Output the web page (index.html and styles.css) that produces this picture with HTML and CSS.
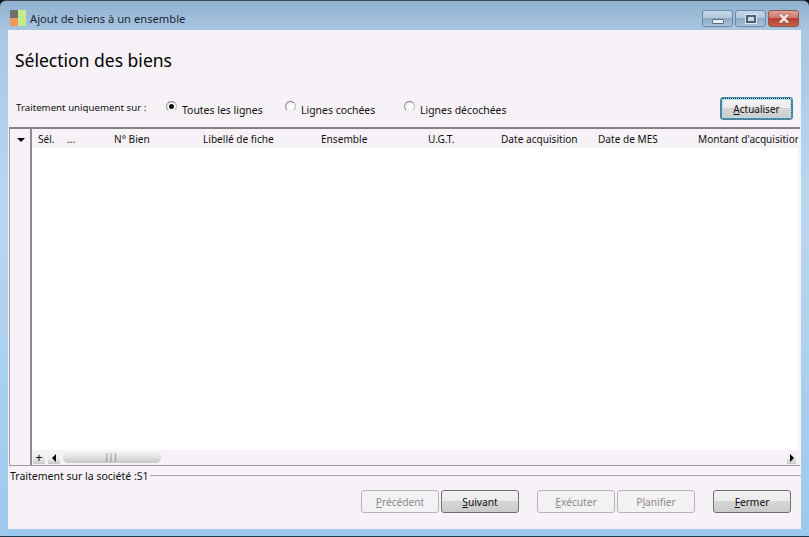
FILE: index.html
```html
<!DOCTYPE html>
<html lang="fr">
<head>
<meta charset="utf-8">
<title>Ajout de biens à un ensemble</title>
<link rel="stylesheet" href="styles.css">
</head>
<body>
<div class="window">
  <header class="titlebar">
    <svg class="app-icon" width="16" height="16" viewBox="0 0 16 16">
      <rect x="0" y="0" width="8" height="8" fill="#6f6f6b"/>
      <rect x="0" y="8" width="8" height="8" fill="#f4955a"/>
      <rect x="8" y="0" width="8" height="16" fill="#c4ec8e"/>
    </svg>
    <span class="title">Ajout de biens à un ensemble</span>
    <div class="controls">
      <div class="ctl ctl-min"><span class="glyph-min"></span></div>
      <div class="ctl ctl-max"><span class="glyph-max"></span></div>
      <div class="ctl ctl-close">
        <svg width="16" height="11" viewBox="0 0 16 11"><path d="M2 1h4l2 2.200L10 1h4L10.200 5.500 14 10h-4L8 7.800 6 10H2l3.800-4.500z" fill="#f1e6e4" stroke="#8a4236" stroke-width=".5"/></svg>
      </div>
    </div>
  </header>
  <main class="client">
    <h1 class="heading">Sélection des biens</h1>
    <div class="options">
      <span class="options-label">Traitement uniquement sur :</span>
      <label class="radio radio-a"><span class="dot on"></span><span>Toutes les lignes</span></label>
      <label class="radio radio-b"><span class="dot"></span><span>Lignes cochées</span></label>
      <label class="radio radio-c"><span class="dot"></span><span>Lignes décochées</span></label>
      <button class="btn btn-focus" type="button"><u>A</u>ctualiser</button>
    </div>
    <section class="grid">
      <div class="grid-side">
        <div class="side-head"><span class="caret"></span></div>
      </div>
      <div class="grid-main">
        <div class="cols">
          <span class="col c1">Sél.</span>
          <span class="col c2">...</span>
          <span class="col c3">N° Bien</span>
          <span class="col c4">Libellé de fiche</span>
          <span class="col c5">Ensemble</span>
          <span class="col c6">U.G.T.</span>
          <span class="col c7">Date acquisition</span>
          <span class="col c8">Date de MES</span>
          <span class="col c9">Montant d'acquisition</span>
        </div>
        <div class="rows"></div>
        <div class="hscroll">
          <span class="sbtn plus">+</span>
          <span class="sbtn sbtn-left"><span class="arrow arrow-left"></span></span>
          <span class="thumb"><span class="grip">|||</span></span>
          <span class="track"></span>
          <span class="sbtn sbtn-right"><span class="arrow arrow-right"></span></span>
        </div>
      </div>
    </section>
    <div class="legend"><span>Traitement sur la société :S1</span><span class="legend-line"></span></div>
    <footer class="actions">
      <button class="btn" type="button" disabled><u>P</u>récédent</button>
      <button class="btn gap-small" type="button"><u>S</u>uivant</button>
      <button class="btn gap-big" type="button" disabled><u>E</u>xécuter</button>
      <button class="btn gap-small" type="button" disabled>P<u>l</u>anifier</button>
      <button class="btn gap-end" type="button"><u>F</u>ermer</button>
    </footer>
  </main>
</div>
</body>
</html>
```
FILE: styles.css
```css
* { box-sizing: border-box; }
html, body { margin: 0; padding: 0; background: #111; }
body { width: 809px; height: 537px; overflow: hidden; font-family: "Noto Sans", "Open Sans", sans-serif; font-size: 11px; color: #111; }
.window {
  width: 809px; height: 537px; display: flex; flex-direction: column;
  padding: 0 8px 7px 8px; border-radius: 6px 6px 0 0;
  background: linear-gradient(180deg, #8fb0cf 0, #a9c7e2 30px, #b9d7f1 200px, #9cc9ee 100%);
  border-top: 1px solid #3a4a58; border-bottom: 1px solid #1d3a52;
}
.titlebar { height: 29px; display: flex; align-items: center; flex: none; padding: 0 0 0 2px; }
.app-icon { flex: none; margin-top: 5px; }
.title { margin-left: 4px; margin-top: 6px; font-size: 11.2px; color: #1d2630; }
.controls { margin-left: auto; display: flex; gap: 2px; align-self: flex-start; margin-top: 9px; margin-right: 2px; }
.ctl { height: 17px; border: 1px solid #6d89a3; border-radius: 3px; display: flex; align-items: center; justify-content: center; width: 31px; background: linear-gradient(180deg, #c6d8e9 0, #b2c8de 45%, #8faac6 50%, #a8c2da 100%); }
.ctl-close { border-color: #8a5a50; background: linear-gradient(180deg, #dca196 0, #cf7a69 45%, #b9402c 50%, #c8604c 100%); }
.glyph-min { width: 12px; height: 5px; margin-top: 5px; background: #eef3f8; border: 1px solid #566c84; border-radius: 1px; }
.glyph-max { width: 10px; height: 8px; border: 2px solid #4a5f76; background: #cfdbe7; box-shadow: 0 0 0 1px #dfe7ef; }
.client { flex: 1; min-height: 0; background: #f6f2f7; display: flex; flex-direction: column; }
.heading { margin: 19px 0 0 7px; height: 22px; line-height: 22px; font-size: 17.5px; font-weight: 400; color: #000; }
.options { height: 31px; margin-top: 25px; display: flex; align-items: flex-start; flex: none; font-size: 10px; }
.options-label { margin: 4px 0 0 8px; width: 150px; line-height: 15px; flex: none; font-size: 9.7px; }
.radio { display: flex; align-items: center; gap: 5px; flex: none; margin-top: 6px; height: 15px; font-size: 10.45px; }
.radio-a { width: 119px; }
.radio-b { width: 119px; }
.radio-c { width: 316px; }
.dot { width: 11px; height: 11px; border-radius: 50%; flex: none; margin-top: -7px; background: radial-gradient(circle at 60% 60%, #fff 0, #f4f4f4 55%, #d8d8d8 100%); border: 1px solid #9a9a9a; border-color: #777 #bbb #eee #999; display: flex; align-items: center; justify-content: center; }
.dot.on::after { content: ""; width: 5px; height: 5px; border-radius: 50%; background: #111; }
.btn {
  width: 78px; height: 23px; padding: 0; flex: none; font: inherit; font-size: 10.2px; color: #111; text-align: center;
  border: 1px solid #6f6f6f; border-radius: 3px;
  background: linear-gradient(180deg, #f3f3f3 0, #ececec 45%, #d6d6d6 50%, #cbcbcb 100%);
}
.btn:disabled { background: #f4f1f5; border-color: #b6b4b6; color: #8a8a8a; }
.btn-focus { width: 73px; margin-top: 1px; font-size: 10px; border: 1px solid #3d8aa8; outline: 1px dotted #222; outline-offset: -2px; box-shadow: inset 0 0 0 2px #a7e0f2; }
.grid { flex: none; margin: 0 1px; height: 339px; display: flex; border-top: 2px solid #828282; border-bottom: 1px solid #9a9a9a; background: #f6f2f7; border-left: 1px solid #a0a0a0; }
.grid-side { width: 22px; flex: none; background: #f6f2f7; border-right: 2px solid #8c8c8c; }
.side-head { height: 21px; display: flex; align-items: center; justify-content: center; }
.caret { width: 0; height: 0; border-left: 4px solid transparent; border-right: 4px solid transparent; border-top: 4px solid #000; margin-left: 2px; }
.grid-main { flex: 1; min-width: 0; display: flex; flex-direction: column; margin-right: 2px; }
.cols { height: 19px; background: #f6f2f7; display: flex; align-items: center; flex: none; overflow: hidden; font-size: 10.1px; white-space: nowrap; padding-top: 1px; }
.col { flex: none; }
.c1 { width: 29px; margin-left: 6px; }
.c2 { width: 47px; }
.c3 { width: 89px; }
.c4 { width: 118px; }
.c5 { width: 107px; }
.c6 { width: 73px; }
.c7 { width: 97px; }
.c8 { width: 100px; }
.c9 { width: 100px; }
.rows { flex: 1; background: #fff; }
.hscroll { height: 15px; flex: none; display: flex; align-items: center; background: #f6f2f7; }
.sbtn { height: 13px; width: 12px; flex: none; display: flex; align-items: center; justify-content: center; background: linear-gradient(180deg, #f6f2f7 0, #ececec 55%, #c8c8c8 100%); }
.plus { margin-left: 1px; font-size: 13px; line-height: 13px; color: #111; }
.sbtn-left { margin-left: 3px; }
.sbtn-right { width: 9px; margin-right: 2px; }
.arrow { width: 0; height: 0; border-top: 4px solid transparent; border-bottom: 4px solid transparent; }
.arrow-left { border-right: 4px solid #000; }
.arrow-right { border-left: 4px solid #000; }
.thumb { width: 98px; height: 11px; margin-left: 3px; border-radius: 5px; flex: none; text-align: center; background: linear-gradient(180deg, #f2f2f2, #dfdfdf 50%, #c8c8c8); color: #777; font-size: 8px; line-height: 10px; }
.grip { margin-right: 2px; }
.track { flex: 1; }
.legend { height: 20px; flex: none; display: flex; align-items: center; gap: 1px; padding: 0 0 0 2px; font-size: 10.5px; }
.legend-line { flex: 1; height: 1px; background: #a8a8a8; margin-top: -2px; }
.actions { flex: 1; display: flex; align-items: flex-start; padding: 4px 0 0 353px; }
.gap-small { margin-left: 2px; }
.gap-big { margin-left: 18px; }
.gap-end { margin-left: 18px; }
```
